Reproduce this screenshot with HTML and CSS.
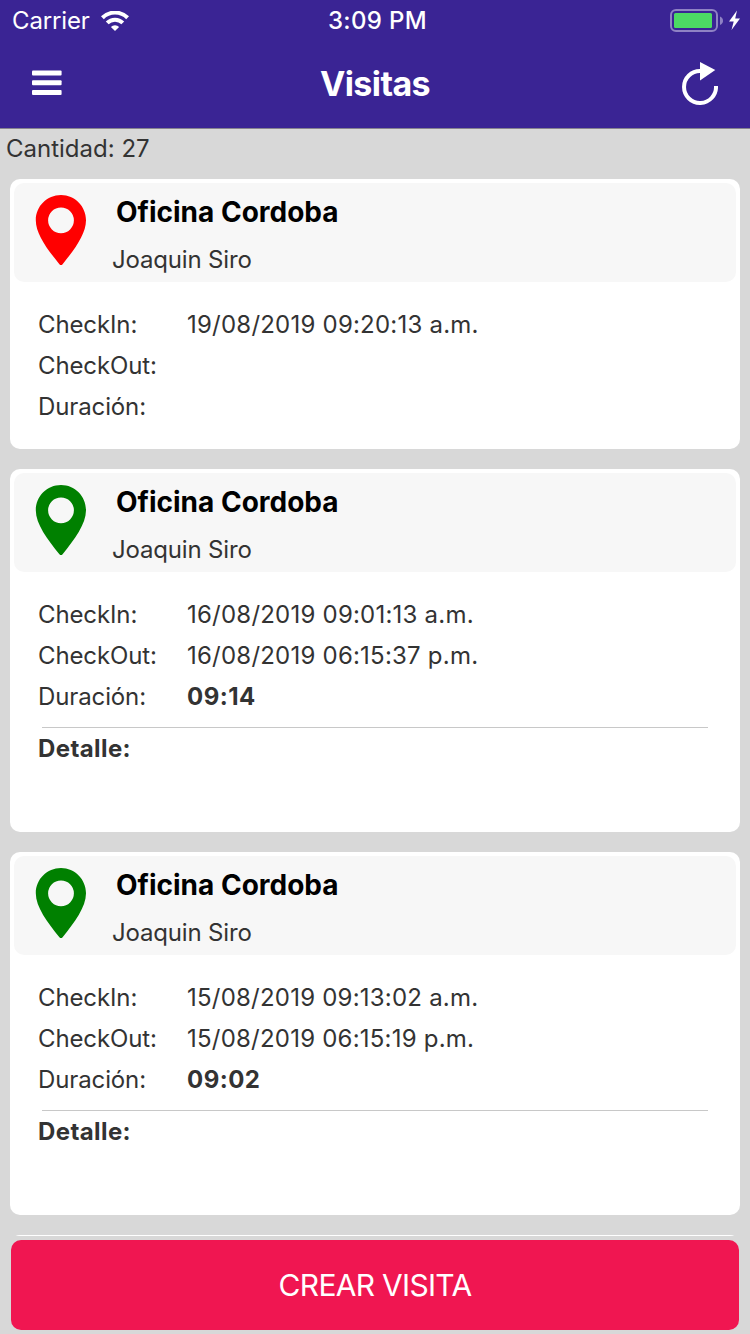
FILE: index.html
```html
<!DOCTYPE html>
<html lang="es">

<head>
    <meta charset="utf-8">
    <title>Visitas</title>
    <link rel="stylesheet" href="styles.css">
</head>

<body>

    <!-- Shared marker icon -->
    <svg class="symbols">
        <symbol id="pin" viewBox="0 0 51 71">
            <path fill-rule="evenodd" d="M26 0C12 0 .8 11.3 .8 25.2C.8 39 12.5 54.5 24.4 69.2Q26 71 27.6 69.2C39.5 54.5 51 39 51 25.2C51 11.3 39.9 0 26 0ZM26 12.4A12.9 12.9 0 1 1 26 38.2A12.9 12.9 0 1 1 26 12.4Z" />
        </symbol>
    </svg>

    <header class="header">
        <div class="status-bar">
            <div class="carrier">
                <span>Carrier</span>
                <svg width="28" height="20" viewBox="0 0 28 20">
                    <g fill="none" stroke="#fff" stroke-width="4">
                        <path d="M1.4 6.7a18 18 0 0 1 25.2 0" />
                        <path d="M6.2 11.9a11.1 11.1 0 0 1 15.6 0" />
                    </g>
                    <path fill="#fff" d="M14 20l-4.1-4.1a5.8 5.8 0 0 1 8.2 0z" />
                </svg>
            </div>
            <span class="time">3:09 PM</span>
            <svg class="battery" width="71" height="24" viewBox="0 0 71 24">
                <rect x="1" y="1" width="46" height="21" rx="5" fill="none" stroke="#8f82c4" stroke-width="2" />
                <rect x="4" y="4" width="38" height="15" rx="1.5" fill="#4cd964" />
                <path fill="#8f82c4" d="M50 7.5q3 1.2 3 4.2t-3 4.2z" />
                <path fill="#fff" d="M67 1.5l-8 11h4.7l-2.2 8.5 8.5-11.5h-4.8z" />
            </svg>
        </div>
        <nav class="nav-bar">
            <svg class="menu" width="30" height="26" viewBox="0 0 30 26">
                <g fill="#fff">
                    <rect y="0.5" width="29.6" height="5" rx="1" />
                    <rect y="10.2" width="29.6" height="5" rx="1" />
                    <rect y="20" width="29.6" height="5" rx="1" />
                </g>
            </svg>
            <h1>Visitas</h1>
            <svg class="refresh" width="36" height="44" viewBox="0 0 36 44">
                <path fill="none" stroke="#fff" stroke-width="4" d="M18.5 9A16 16 0 1 0 34 24" />
                <path fill="#fff" d="M18 0l15.3 8L18 18.4z" />
            </svg>
        </nav>
    </header>

    <main class="content">
        <p class="count">Cantidad: 27</p>

        <section class="card">
            <div class="card-header">
                <svg class="pin pin-open"><use href="#pin" /></svg>
                <div>
                    <h2>Oficina Cordoba</h2>
                    <p>Joaquin Siro</p>
                </div>
            </div>
            <dl class="data">
                <dt>CheckIn:</dt>
                <dd>19/08/2019 09:20:13 a.m.</dd>
                <dt>CheckOut:</dt>
                <dd></dd>
                <dt>Duración:</dt>
                <dd></dd>
            </dl>
        </section>

        <section class="card">
            <div class="card-header">
                <svg class="pin pin-closed"><use href="#pin" /></svg>
                <div>
                    <h2>Oficina Cordoba</h2>
                    <p>Joaquin Siro</p>
                </div>
            </div>
            <dl class="data">
                <dt>CheckIn:</dt>
                <dd>16/08/2019 09:01:13 a.m.</dd>
                <dt>CheckOut:</dt>
                <dd>16/08/2019 06:15:37 p.m.</dd>
                <dt>Duración:</dt>
                <dd class="duration">09:14</dd>
            </dl>
            <div class="detail">Detalle:</div>
        </section>

        <section class="card">
            <div class="card-header">
                <svg class="pin pin-closed"><use href="#pin" /></svg>
                <div>
                    <h2>Oficina Cordoba</h2>
                    <p>Joaquin Siro</p>
                </div>
            </div>
            <dl class="data">
                <dt>CheckIn:</dt>
                <dd>15/08/2019 09:13:02 a.m.</dd>
                <dt>CheckOut:</dt>
                <dd>15/08/2019 06:15:19 p.m.</dd>
                <dt>Duración:</dt>
                <dd class="duration">09:02</dd>
            </dl>
            <div class="detail">Detalle:</div>
        </section>

        <section class="card next-card"></section>
    </main>

    <footer class="footer">
        <button type="button">CREAR VISITA</button>
    </footer>

</body>

</html>
```

FILE: styles.css
```css
* {
    box-sizing: border-box;
}

body {
    margin: 0;
    height: 1334px;
    display: flex;
    flex-direction: column;
    overflow: hidden;
    background: #d8d8d8;
    color: #333;
    font-family: Inter, "Liberation Sans", sans-serif;
    font-size: 24px;
}

h1,
h2,
p,
dl,
dd {
    margin: 0;
}

.symbols {
    display: none;
}

/* Header */

.header {
    flex: none;
    height: 129px;
    background: #3a2494;
    border-bottom: 1px solid #86838f;
    color: #fff;
}

.status-bar {
    display: grid;
    grid-template-columns: 1fr auto 1fr;
    align-items: center;
    height: 40px;
    padding: 1px 9px 0 12px;
}

.carrier {
    display: flex;
    align-items: center;
    gap: 11px;
    letter-spacing: -0.15px;
}

.time {
    font-weight: 500;
    letter-spacing: 0.35px;
    padding-left: 2px;
}

.battery {
    justify-self: end;
}

.nav-bar {
    display: grid;
    grid-template-columns: 1fr auto 1fr;
    align-items: center;
    height: 88px;
    padding: 0 32px;
}

.nav-bar h1 {
    font-size: 34px;
    font-weight: 700;
    letter-spacing: -0.6px;
    padding-bottom: 1px;
}

.menu {
    margin-bottom: 2px;
}

.refresh {
    justify-self: end;
}

/* List of visits */

.content {
    flex: 1;
    min-height: 0;
    overflow: hidden;
    padding: 0 10px;
}

.count {
    height: 50px;
    line-height: 40px;
    margin-left: -4px;
}

.card {
    background: #fff;
    border-radius: 10px;
    padding: 4px;
    margin-bottom: 20px;
}

.next-card {
    height: 200px;
}

.card-header {
    display: flex;
    height: 99px;
    padding: 12px 21px;
    gap: 26px;
    background: #f7f7f7;
    border-radius: 10px;
}

.pin {
    width: 51px;
    height: 71px;
}

.pin-open {
    fill: red;
}

.pin-closed {
    fill: green;
}

.card-header h2 {
    padding-left: 4px;
    color: #000;
    font-size: 28px;
    font-weight: 700;
    letter-spacing: 0;
    line-height: 34px;
}

.card-header p {
    margin-top: 14px;
    line-height: 34px;
    letter-spacing: -0.17px;
}

.data {
    display: grid;
    grid-template-columns: 149px 1fr;
    grid-auto-rows: 41px;
    line-height: 41px;
    padding: 22px 24px 18px;
}

.data dt {
    letter-spacing: -0.12px;
}

.data dd {
    letter-spacing: 0.22px;
}

.data .duration {
    font-weight: 700;
    letter-spacing: 0.45px;
}

.detail {
    height: 101px;
    margin: -8px 28px 0;
    border-top: 1px solid #c8c8c8;
    line-height: 42px;
    font-weight: 700;
    letter-spacing: 0.4px;
    text-indent: -4px;
}

/* Bottom action */

.footer {
    flex: none;
    height: 98px;
    padding: 4px 11px;
}

.footer button {
    width: 100%;
    height: 90px;
    border: none;
    border-radius: 10px;
    background: #f01651;
    color: #fff;
    font-family: inherit;
    font-size: 30px;
    letter-spacing: -0.7px;
}
```
